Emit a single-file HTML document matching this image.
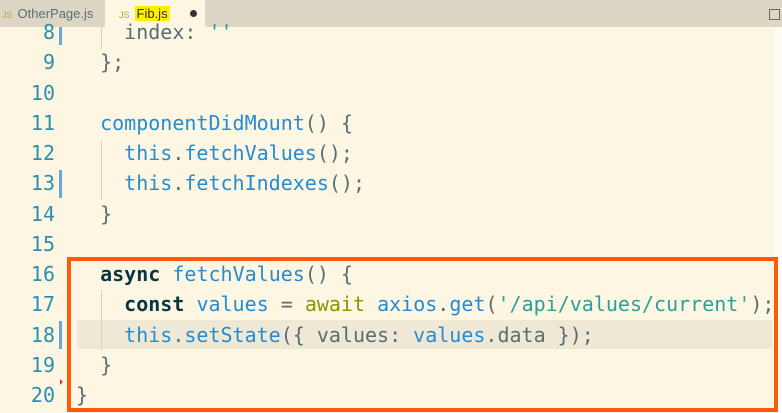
<!DOCTYPE html>
<html><head><style>
body{margin:0;width:782px;height:413px;overflow:hidden;background:#fdf6e3;position:relative;font-family:"DejaVu Sans Mono","Liberation Mono",monospace;}
.tabs{position:absolute;left:0;top:0;width:782px;height:27px;background:#ddd6c5;}
.tab{position:absolute;top:0;height:27px;font-family:"Liberation Sans",sans-serif;font-size:13px;line-height:27px;color:#586e75;}
.js{font-size:9px;color:#b5a642;margin-right:5px;}
.right{position:absolute;left:775px;top:27px;width:7px;height:386px;background:#fefcf5;}
.ln{position:absolute;left:0;width:55px;text-align:right;color:#2a8fb0;font-size:20px;}
.code{position:absolute;left:76px;white-space:pre;font-size:20px;color:#586e75;}
.k{color:#073642;font-weight:bold}.f{color:#268bd2}.g{color:#859900}.s{color:#2aa198}
.mark{position:absolute;left:59px;width:3px;height:28px;background:#6aa8d8;}
.guide{position:absolute;left:101px;width:1px;background:#d8d0bd;}
</style></head><body>
<div class="tabs">
<div class="tab" style="left:0;width:105px;padding-left:2px"><span class="js">JS</span>OtherPage.js</div>
<div class="tab" style="left:105px;width:100px;background:#fdf6e3;padding-left:14px;box-sizing:border-box"><span class="js">JS</span><span style="background:#ffee00;color:#333;padding:0 2px">Fib.js</span><span style="position:absolute;left:85px;top:10px;width:7px;height:7px;border-radius:50%;background:#333"></span></div>
<div style="position:absolute;left:769px;top:9px;width:9px;height:9px;border:1px solid #666"></div>
</div>
<div class="right"></div>
<div style="position:absolute;left:77px;top:320px;width:695px;height:29px;background:#eee8d5"></div>
<div class="mark" style="top:27px;height:18px"></div>
<div class="mark" style="top:170px"></div>
<div class="mark" style="top:321px"></div>
<div class="guide" style="top:27px;height:22px"></div>
<div class="guide" style="top:140px;height:60px"></div>
<div class="guide" style="top:290px;height:60px"></div>
<div style="position:absolute;left:60px;top:379px;width:0;height:0;border-left:3px solid #dc322f;border-top:3px solid transparent;border-bottom:3px solid transparent"></div>
<div style="position:absolute;top:17px;left:0;line-height:30.25px">
<div class="ln" style="top:0">8</div><div class="ln" style="top:30.25px">9</div><div class="ln" style="top:60.5px">10</div><div class="ln" style="top:90.75px">11</div><div class="ln" style="top:121px">12</div><div class="ln" style="top:151.25px">13</div><div class="ln" style="top:181.5px">14</div><div class="ln" style="top:211.75px">15</div><div class="ln" style="top:242px">16</div><div class="ln" style="top:272.25px">17</div><div class="ln" style="top:302.5px">18</div><div class="ln" style="top:332.75px">19</div><div class="ln" style="top:363px">20</div>
<div class="code" style="top:0">    index: <span class="s">''</span></div>
<div class="code" style="top:30.25px">  };</div>
<div class="code" style="top:90.75px">  <span class="f">componentDidMount</span>() {</div>
<div class="code" style="top:121px">    <span class="f">this</span>.<span class="f">fetchValues</span>();</div>
<div class="code" style="top:151.25px">    <span class="f">this</span>.<span class="f">fetchIndexes</span>();</div>
<div class="code" style="top:181.5px">  }</div>
<div class="code" style="top:242px">  <span class="k">async</span> <span class="f">fetchValues</span>() {</div>
<div class="code" style="top:272.25px">    <span class="k">const</span> <span class="f">values</span> = <span class="g">await</span> <span class="f">axios</span>.<span class="f">get</span>(<span class="s">'/api/values/current'</span>);</div>
<div class="code" style="top:302.5px">    <span class="f">this</span>.<span class="f">setState</span>({ values: <span class="f">values</span>.data });</div>
<div class="code" style="top:332.75px">  }</div>
<div class="code" style="top:363px">}</div>
</div>
<div style="position:absolute;left:67px;top:257px;width:703px;height:147px;border:4px solid #ff5a0a"></div>
</body></html>
